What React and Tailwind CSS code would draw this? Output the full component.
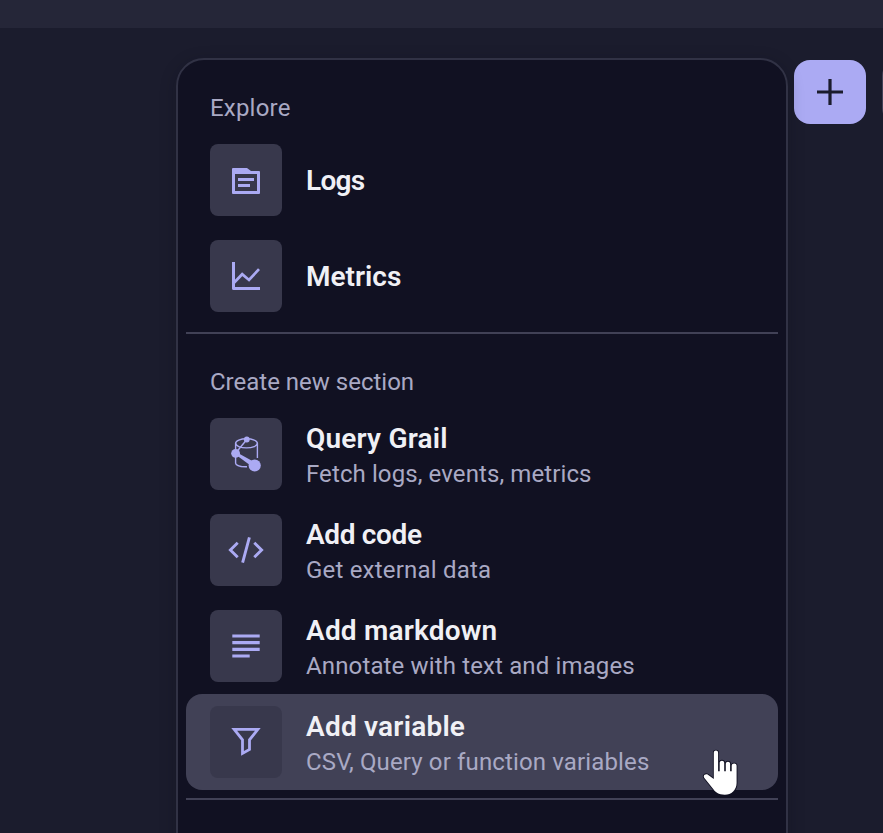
import React from "react";

function LogsIcon() {
  return (
    <svg width="72" height="72" viewBox="0 0 72 72" fill="currentColor">
      <path fillRule="evenodd" d="M23 24H37L41 27H49a1 1 0 0 1 1 1V49a1 1 0 0 1-1 1H23a1 1 0 0 1-1-1V25a1 1 0 0 1 1-1ZM25 30V47H47V30Z" />
      <path d="M28 34h16v3H28zM28 40h12v3H28z" />
    </svg>
  );
}

function MetricsIcon() {
  return (
    <svg width="72" height="72" viewBox="0 0 72 72" fill="none" stroke="currentColor">
      <path d="M23.5 22V48.5H50" strokeWidth="3" strokeLinejoin="round" />
      <path d="M24 42.8L32.2 34.2L39 40L49 29.2" strokeWidth="2.7" />
    </svg>
  );
}

function GrailIcon() {
  return (
    <svg width="72" height="72" viewBox="0 0 72 72" fill="none" stroke="currentColor" strokeWidth="1.4">
      <ellipse cx="36.5" cy="25.3" rx="10.9" ry="4.6" />
      <path d="M25.6 25.3V45.2C25.8 47.4 30.5 48.9 37 48.7M47.4 25.3V40" />
      <path d="M25.5 35.2L36.8 21.5" />
      <path d="M27 34.6L46 45L42.5 49L25.5 36.6Z" fill="currentColor" stroke="none" />
      <g fill="currentColor" stroke="none">
        <circle cx="36.8" cy="21.5" r="2.9" />
        <circle cx="25.6" cy="35.3" r="4.4" />
        <circle cx="44.7" cy="47.5" r="6.1" />
      </g>
    </svg>
  );
}

function CodeIcon() {
  return (
    <svg width="72" height="72" viewBox="0 0 72 72" fill="none" stroke="currentColor" strokeWidth="2.9">
      <path d="M27.7 28.8L20.4 36L27.7 43.2M44.3 28.8L51.6 36L44.3 43.2M39.4 23.3L32.6 48.6" />
    </svg>
  );
}

function MarkdownIcon() {
  return (
    <svg width="72" height="72" viewBox="0 0 72 72" fill="none" stroke="currentColor" strokeWidth="3.2">
      <path d="M22.3 26H49.7M22.3 32.6H49.7M22.3 39.3H49.7M22.3 46H39.7" />
    </svg>
  );
}

function FilterIcon() {
  return (
    <svg width="72" height="72" viewBox="0 0 72 72" fill="none" stroke="currentColor" strokeWidth="2.8">
      <path d="M24.2 23.4H47.8L39.5 33.8V43.4L32.5 47.4V33.8Z" />
    </svg>
  );
}

function Cursor() {
  return (
    <svg className="absolute left-[700px] top-[745px] z-20" width="42" height="55" viewBox="0 0 42 55">
      <path
        d="M13.8 7.8C13.8 4.8 18.1 4.8 18.1 7.8V26.3H19.7V17.8C19.7 14.9 24.2 14.9 24.2 17.8V26.3H25.8V18.8C25.8 16 30.1 16 30.1 18.8V26.3H31.7V20.8C31.7 17.9 36.6 17.9 36.6 20.8V38C36.6 45.2 31.4 49.7 24.8 49.7C18.5 49.7 15.5 47.5 12.4 43L4.2 32.7C2.7 30.3 5.7 28.5 7.9 29.7L13.8 34Z"
        fill="#ffffff" stroke="#111122" strokeWidth="1.8" paintOrder="stroke" strokeLinejoin="round"
      />
    </svg>
  );
}

function SectionLabel({ children, tracking }) {
  return (
    <div className={`h-16 pl-6 pt-4 text-2xl leading-[48px] text-[#a9a9c4] ${tracking}`}>
      <span>{children}</span>
    </div>
  );
}

function Item({ icon: Icon, title, text, active, tracking = "", textTracking = "" }) {
  return (
    <div className={`flex h-24 items-center gap-6 rounded-2xl px-6 ${active ? "bg-[#414156]" : ""}`}>
      <div className="size-[72px] shrink-0 rounded-lg bg-[#38384c] text-[#abaaf3]">
        <Icon />
      </div>
      <div className={`whitespace-nowrap ${text ? "pt-[5px]" : "pt-0.5"}`}>
        <div className={`text-[28px] font-semibold text-[#f0f0f5] ${text ? "leading-[35px]" : "leading-9"} ${tracking}`}>
          <span>{title}</span>
        </div>
        {text && (
          <div className={`text-2xl leading-9 text-[#a9a9c4] ${textTracking}`}>
            <span>{text}</span>
          </div>
        )}
      </div>
    </div>
  );
}

function Divider() {
  return <div className="my-2 h-0.5 bg-[#414156]" />;
}

export default function App() {
  return (
    <div className="relative h-[833px] w-[883px] overflow-hidden bg-[#1b1c2d] font-[Roboto,sans-serif]">
      <div className="h-7 bg-[#252638]" />
      <div className="flex items-start pl-[176px] pt-[30px]">
        <div className="z-10 h-[840px] w-[612px] shrink-0 rounded-[28px] border-2 border-[#313245] bg-[#111122] p-2 shadow-[0_4px_16px_rgba(10,10,25,0.25)]">
          <SectionLabel tracking="tracking-[0.2px]">Explore</SectionLabel>
          <Item icon={LogsIcon} title="Logs" tracking="tracking-[-0.7px]" />
          <Item icon={MetricsIcon} title="Metrics" />
          <Divider />
          <SectionLabel tracking="tracking-normal">Create new section</SectionLabel>
          <Item icon={GrailIcon} title="Query Grail" text="Fetch logs, events, metrics" tracking="tracking-[0.2px]" textTracking="tracking-[0.1px]" />
          <Item icon={CodeIcon} title="Add code" text="Get external data" tracking="tracking-[-0.35px]" textTracking="tracking-[0.2px]" />
          <Item icon={MarkdownIcon} title="Add markdown" text="Annotate with text and images" tracking="tracking-[0.2px]" textTracking="tracking-[0.14px]" />
          <Item icon={FilterIcon} title="Add variable" text="CSV, Query or function variables" active tracking="tracking-[0.22px]" textTracking="tracking-[0.14px]" />
          <Divider />
        </div>
        <button className="ml-1.5 mt-0.5 flex h-16 w-[72px] shrink-0 items-center justify-center rounded-2xl bg-[#abaaf3] text-[#1b1c2d]">
          <svg width="26" height="26" viewBox="0 0 26 26" fill="none" stroke="currentColor" strokeWidth="3.2">
            <path d="M13 0V26M0 13H26" />
          </svg>
        </button>
        <div className="ml-4 mt-0.5 h-16 w-[72px] shrink-0 rounded-2xl border-2 border-[#414156]" />
      </div>
      <Cursor />
    </div>
  );
}
